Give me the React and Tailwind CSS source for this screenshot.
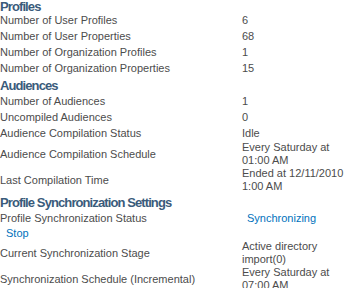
import React from "react";

const sections = [
  {
    title: "Profiles",
    rows: [
      { label: "Number of User Profiles", value: ["6"] },
      { label: "Number of User Properties", value: ["68"] },
      { label: "Number of Organization Profiles", value: ["1"] },
      { label: "Number of Organization Properties", value: ["15"] },
    ],
  },
  {
    title: "Audiences",
    rows: [
      { label: "Number of Audiences", value: ["1"] },
      { label: "Uncompiled Audiences", value: ["0"] },
      { label: "Audience Compilation Status", value: ["Idle"] },
      { label: "Audience Compilation Schedule", value: ["Every Saturday at", "01:00 AM"] },
      { label: "Last Compilation Time", value: ["Ended at 12/11/2010", "1:00 AM"] },
    ],
  },
];

const Row = ({ label, value }) => (
  <div className="flex items-center min-h-[16px]">
    <div className="w-[242px] shrink-0">{label}</div>
    <div>
      {value.map((v) => (
        <div key={v}>{v}</div>
      ))}
    </div>
  </div>
);

const Heading = ({ children, first }) => (
  <div
    className={`font-bold text-[13px] tracking-[-0.9px] text-[#3a5b7b] leading-[14px] ${first ? "h-[12px]" : "mt-[3px]"}`}
  >
    {children}
  </div>
);

export default function App() {
  return (
    <div
      className="w-[344px] h-[288px] overflow-hidden bg-white text-[11px] leading-[13px] text-[#4c4c4c]"
      style={{ fontFamily: "Tahoma, 'Liberation Sans', Arial, sans-serif" }}
    >
      {sections.map((s, i) => (
        <div key={s.title}>
          <Heading first={i === 0}>{s.title}</Heading>
          {s.rows.map((r) => (
            <Row key={r.label} {...r} />
          ))}
        </div>
      ))}
      <Heading>Profile Synchronization Settings</Heading>
      <div className="flex items-center min-h-[16px]">
        <div className="w-[242px] shrink-0">Profile Synchronization Status</div>
        <a href="#" className="pl-[5px] text-[#0072bc]">
          Synchronizing
        </a>
      </div>
      <div className="flex items-center h-[14px] pl-[6px]">
        <a href="#" className="text-[#0072bc]">
          Stop
        </a>
      </div>
      <Row label="Current Synchronization Stage" value={["Active directory", "import(0)"]} />
      <Row label="Synchronization Schedule (Incremental)" value={["Every Saturday at", "07:00 AM"]} />
    </div>
  );
}
